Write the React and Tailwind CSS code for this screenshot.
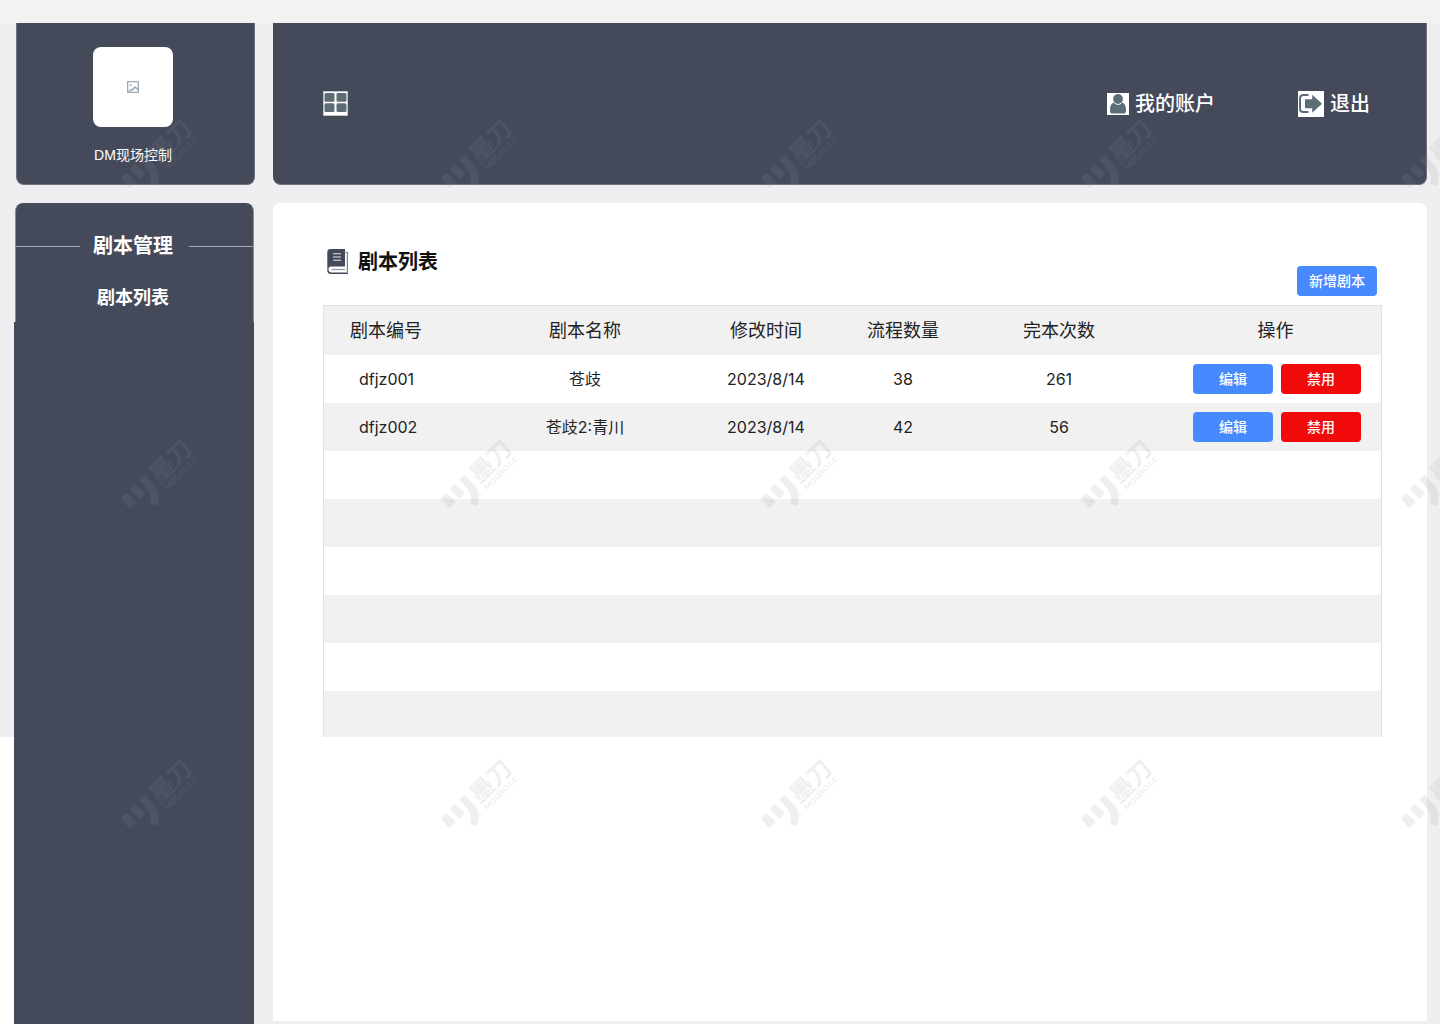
const scripts = [
  { id: "dfjz001", name: "苍歧", updatedAt: "2023/8/14", steps: 38, finished: 261 },
  { id: "dfjz002", name: "苍歧2:青川", updatedAt: "2023/8/14", steps: 42, finished: 56 },
];

const emptyRows = [0, 1, 2, 3, 4, 5];

function GridIcon() {
  return (
    <svg width="25" height="25" viewBox="0 0 25 25" aria-hidden="true">
      <rect width="25" height="25" fill="#a7abb2" />
      <rect x="0.7" y="0.7" width="23.6" height="23.6" fill="#fff" />
      <g fill="#5c6d75">
        <rect x="1.5" y="2" width="10" height="8.8" rx="1.5" />
        <rect x="13.5" y="2" width="10" height="8.8" rx="1.5" />
        <rect x="1.5" y="12.2" width="10" height="8.8" rx="1.5" />
        <rect x="13.5" y="12.2" width="10" height="8.8" rx="1.5" />
      </g>
    </svg>
  );
}

function UserIcon() {
  return (
    <svg width="22" height="22" viewBox="0 0 22 22" aria-hidden="true">
      <rect width="22" height="22" fill="#fff" />
      <g fill="#5c6d75">
        <path d="M6.8 9.4C4.3 10.4 3 13 3 16.5V18c0 1.7 1 2.6 2.7 2.6h10.6c1.7 0 2.7-.9 2.7-2.6v-1.5c0-3.5-1.3-6.1-3.8-7.1-1 1.5-2.5 2.3-4.2 2.3s-3.2-.8-4.2-2.3z" />
        <circle cx="11" cy="6" r="4.9" />
      </g>
    </svg>
  );
}

function LogoutIcon() {
  return (
    <svg width="26" height="26" viewBox="0 0 26 26" aria-hidden="true">
      <rect width="26" height="26" fill="#fff" />
      <path
        d="M10.5 4H5.5C3.300 4 2 5.300 2 7.500v10C2 19.700 3.300 21 5.500 21h5"
        fill="none"
        stroke="#5c6d75"
        strokeWidth="2"
      />
      <path d="M7 8.200h7.200V3.800L24 12.800l-9.800 9V17.200H7z" fill="#5c6d75" />
    </svg>
  );
}

function BookIcon() {
  return (
    <svg width="22" height="26" viewBox="0 0 22 26" aria-hidden="true">
      <path
        d="M3.500 0H18v17.500H4.200c-1.700 0-2.700.9-2.700 2.700 0 1.800 1 3.300 2.800 3.300H21V25H3.800C1.600 25 0.300 23.500 0.300 21.500V3.200C0.300 1.200 1.600 0 3.500 0z"
        fill="#454a5b"
      />
      <path d="M18.500 3.500H20.400V24.200" fill="none" stroke="#7d818d" strokeWidth="1.200" />
      <path d="M4.500 20.500H18" stroke="#9396a1" strokeWidth="1.200" />
      <path d="M6 4.800h8M6 8h8M6 11.300h8" stroke="#e3e4e8" strokeWidth="1.100" />
    </svg>
  );
}

function ImageIcon() {
  return (
    <svg width="12" height="12" viewBox="0 0 12 12" fill="none" stroke="#98a9b3" aria-hidden="true">
      <rect x="0.600" y="0.600" width="10.800" height="10.800" rx="1" strokeWidth="1.500" />
      <circle cx="3.800" cy="4" r="0.800" fill="#98a9b3" strokeWidth="0.500" />
      <path d="M2 10.500l2.500-2.200 1 .5L8 6l3.400 3" strokeWidth="1.400" />
    </svg>
  );
}

function Watermark() {
  return (
    <svg className="absolute inset-0 h-full w-full pointer-events-none" aria-hidden="true">
      <defs>
        <pattern id="watermark" width="320" height="320" patternUnits="userSpaceOnUse">
          <g fill="#8c8c8c" fillOpacity="0.14">
            <path d="M120.700 178.300l6-5.300 9.300 9-6.600 6.300z" />
            <path d="M130 169l5-5 9.700 9.300-5.400 5.700z" />
            <path d="M139 160l5.300-5.300C155 165 163 172 156.700 186l-6.700-2c3-9-1-15-11-24z" />
            <g transform="translate(171 143) rotate(-45)" textAnchor="middle">
              <text
                x="1"
                y="7"
                className="font-['Noto_Sans_CJK_SC',sans-serif] text-[24px] font-bold"
              >
                墨刀
              </text>
              <text x="0" y="17" className="font-['Lato',sans-serif] text-[8px] font-bold">
                MODAO.CC
              </text>
            </g>
          </g>
        </pattern>
      </defs>
      <rect width="100%" height="100%" fill="url(#watermark)" />
    </svg>
  );
}

function Sidebar() {
  return (
    <aside className="flex w-[241px] shrink-0 flex-col">
      <div className="ml-[2px] flex h-[162px] flex-col items-center rounded-b-lg border-x border-b border-[#6d717e] bg-[#454a5b] pt-6 pr-[5px]">
        <div className="flex h-20 w-20 items-center justify-center rounded-lg bg-white">
          <ImageIcon />
        </div>
        <p className="mt-[18px] text-sm text-white">DM现场控制</p>
      </div>

      <nav className="mt-[18px] flex flex-1 flex-col">
        <div className="mx-px rounded-t-lg border-x border-[#8a8d98] bg-[#454a5b] pt-[29px] pb-[10px] text-center font-bold text-white">
          <div className="flex items-center justify-between">
            <span className="h-px w-16 bg-[#a9abb4]" />
            <h2 className="pr-[3px] text-xl leading-7">剧本管理</h2>
            <span className="h-px w-16 bg-[#a9abb4]" />
          </div>
          <a href="#scripts" className="mt-6 block pr-[3px] text-lg leading-7">
            剧本列表
          </a>
        </div>
        <div className="mr-px flex-1 bg-[#454a5b]" />
      </nav>
    </aside>
  );
}

function TopBar() {
  return (
    <header className="flex h-[162px] items-center justify-between rounded-b-lg border-r border-b border-[#6d717e] bg-[#454a5b] pl-[50px] pr-14 text-xl font-medium text-white">
      <button type="button" aria-label="菜单">
        <GridIcon />
      </button>
      <div className="flex items-center gap-[83px]">
        <button type="button" className="flex items-center gap-[6px]">
          <UserIcon />
          我的账户
        </button>
        <button type="button" className="flex items-center gap-[6px]">
          <LogoutIcon />
          退出
        </button>
      </div>
    </header>
  );
}

function ScriptTable() {
  return (
    <div className="border-x border-t border-[#e0e0e0]">
      <table className="w-full table-fixed text-center text-base text-[#222]">
        <colgroup>
          <col className="w-[172px]" />
          <col className="w-[178px]" />
          <col className="w-[184px]" />
          <col className="w-[90px]" />
          <col className="w-[222px]" />
          <col className="w-[211px]" />
        </colgroup>
        <thead>
          <tr className="h-[49px] bg-[#f1f1f1] text-lg">
            <th className="pl-[26px] text-left font-normal">剧本编号</th>
            <th className="font-normal">剧本名称</th>
            <th className="font-normal">修改时间</th>
            <th className="font-normal">流程数量</th>
            <th className="font-normal">完本次数</th>
            <th className="font-normal">操作</th>
          </tr>
        </thead>
        <tbody className="font-['Inter','Noto_Sans_CJK_SC',sans-serif]">
          {scripts.map((item) => (
            <tr key={item.id} className="h-12 even:bg-[#f1f1f1]">
              <td className="pl-[35px] text-left">{item.id}</td>
              <td>{item.name}</td>
              <td>{item.updatedAt}</td>
              <td>{item.steps}</td>
              <td>{item.finished}</td>
              <td>
                <div className="flex justify-end gap-2 pr-5 text-sm font-medium text-white">
                  <button type="button" className="h-[30px] w-20 rounded bg-[#478aff]">
                    编辑
                  </button>
                  <button type="button" className="h-[30px] w-20 rounded bg-[#f00a0a]">
                    禁用
                  </button>
                </div>
              </td>
            </tr>
          ))}
          {emptyRows.map((row) => (
            <tr key={row} className="h-12 last:h-[46px] even:bg-[#f1f1f1]">
              <td colSpan={6} />
            </tr>
          ))}
        </tbody>
      </table>
    </div>
  );
}

export default function App() {
  return (
    <div className="relative flex min-h-screen flex-col overflow-hidden bg-[#efeff1] font-['Liberation_Sans','Noto_Sans_CJK_SC',sans-serif]">
      <div className="h-[23px] bg-[#f2f2f2]" />
      <div className="flex flex-1">
        <div className="flex w-[14px] shrink-0 flex-col">
          <div className="h-[714px]" />
          <div className="flex-1 bg-white" />
        </div>
        <Sidebar />
        <div className="ml-[18px] mr-[13px] mb-[3px] flex min-w-0 flex-1 flex-col gap-[18px]">
          <TopBar />
          <main id="scripts" className="flex-1 rounded-t-lg bg-white pt-[45px] pl-[50px] pr-[45px]">
            <div className="mb-[9px] flex h-12 items-start justify-between pr-[5px] pl-1">
              <h1 className="flex items-center gap-[9px] text-xl leading-7 font-bold text-[#111]">
                <BookIcon />
                剧本列表
              </h1>
              <button
                type="button"
                className="h-[30px] w-20 self-end rounded bg-[#478aff] text-sm font-medium text-white"
              >
                新增剧本
              </button>
            </div>
            <ScriptTable />
          </main>
        </div>
      </div>
      <Watermark />
    </div>
  );
}
